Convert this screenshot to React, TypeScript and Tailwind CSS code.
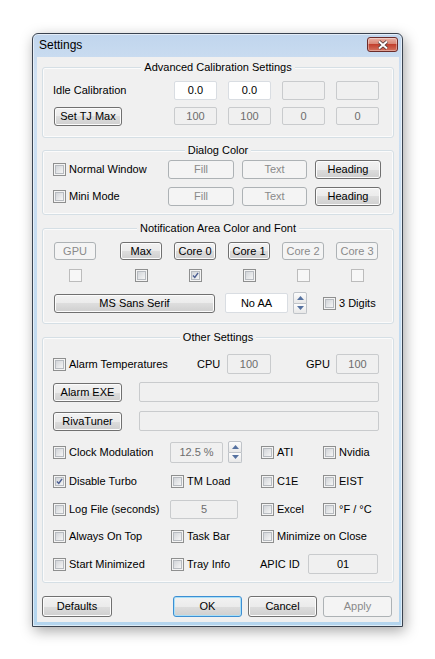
import React from "react";

type Kids = { children?: React.ReactNode; className?: string };

const BTN_FACE = "bg-[linear-gradient(#f2f2f2,#ebebeb_50%,#dddddd_50%,#cfcfcf)]";

function Btn({
  children,
  className = "",
  disabled = false,
  isDefault = false,
}: Kids & { disabled?: boolean; isDefault?: boolean }) {
  const look = disabled
    ? "border-[#adb2b5] bg-[#f4f4f4] text-[#8a8a8a]"
    : isDefault
      ? `border-[#3c8ed3] ${BTN_FACE} shadow-[inset_0_0_0_1px_#a9dff7] text-black`
      : `border-[#707070] ${BTN_FACE} shadow-[inset_0_0_0_1px_#fcfcfc] text-black`;
  return (
    <button
      type="button"
      className={`flex shrink-0 items-center justify-center rounded-[3px] border leading-[13px] ${look} ${className}`}
    >
      {children}
    </button>
  );
}

function Edit({ children, className = "", on = false, dark = false }: Kids & { on?: boolean; dark?: boolean }) {
  const look = on ? "border-[#d9dde2] bg-white" : "border-[#c9cbcd] bg-[#f0f0f0]";
  return (
    <div
      className={`flex shrink-0 items-center justify-center rounded-[2px] border leading-[13px] ${look} ${
        on || dark ? "text-black" : "text-[#6d6d6d]"
      } ${className}`}
    >
      {children}
    </div>
  );
}

function Box({ on = true, checked = false }: { on?: boolean; checked?: boolean }) {
  if (!on) {
    return <span className="block h-[13px] w-[13px] shrink-0 border border-[#bcbcbc] bg-[#f7f7f7]" />;
  }
  return (
    <span className="flex h-[13px] w-[13px] shrink-0 border border-[#8e8f8f] bg-[#f4f4f4] p-[1px]">
      <span className="flex h-full w-full items-center justify-center border border-[#b7bbc0] bg-[linear-gradient(135deg,#d2d5d9,#f5f5f5)]">
        {checked && (
          <svg width="9" height="9" viewBox="0 0 9 9">
            <path d="M1.2 4.6 L3.6 7 L7.8 1.2" fill="none" stroke="#4a5d91" strokeWidth="1.8" />
          </svg>
        )}
      </span>
    </span>
  );
}

function Check({
  label,
  className = "",
  on = true,
  checked = false,
}: {
  label: string;
  className?: string;
  on?: boolean;
  checked?: boolean;
}) {
  return (
    <div className={`flex shrink-0 items-center gap-[3px] ${className}`}>
      <Box on={on} checked={checked} />
      <span className="leading-[13px] whitespace-nowrap">{label}</span>
    </div>
  );
}

function Spin({ className = "" }: { className?: string }) {
  return (
    <div className={`flex w-[14px] shrink-0 flex-col ${className}`}>
      <div className="flex flex-1 items-center justify-center rounded-t-[2px] border border-[#bfc3c8] bg-[linear-gradient(#fcfcfc,#e8e8e8)]">
        <svg width="7" height="4" viewBox="0 0 7 4">
          <path d="M0 4 L3.5 0 L7 4Z" fill="#5571a0" />
        </svg>
      </div>
      <div className="flex flex-1 items-center justify-center rounded-b-[2px] border border-t-0 border-[#bfc3c8] bg-[linear-gradient(#fcfcfc,#e8e8e8)]">
        <svg width="7" height="4" viewBox="0 0 7 4">
          <path d="M0 0 L3.5 4 L7 0Z" fill="#5571a0" />
        </svg>
      </div>
    </div>
  );
}

function Group({ title, children, className = "" }: Kids & { title: string }) {
  return (
    <div className={`mx-[5px] rounded-[3px] border border-[#d5dfe5] shadow-[inset_0_0_0_1px_#fbfbfb] ${className}`}>
      <div className="mx-auto -mt-[7px] w-fit bg-[#f0f0f0] px-[3px] leading-[13px]">{title}</div>
      {children}
    </div>
  );
}

export default function App() {
  return (
    <div className="min-h-screen bg-white pt-[33px] pl-[32px] font-['Liberation_Sans',Arial,sans-serif] text-[11px] text-black">
      <div className="w-[371px] rounded-t-[6px] border border-[#3a4350] bg-[linear-gradient(#c0d5ed,#cfe0f2_40px,#b4d5ee)] shadow-[2px_4px_14px_rgba(0,0,0,0.35),inset_0_0_0_1px_rgba(255,255,255,0.55)]">
        {/* title bar */}
        <div className="flex h-[23px] items-start justify-between pr-[4px] pl-[6px]">
          <span className="pt-[4px] text-[12px] leading-[14px]">Settings</span>
          <div className="mt-[3px] flex h-[15px] w-[31px] items-center justify-center rounded-[3px] border border-[#6b2c2a] bg-[linear-gradient(#eab2a6,#d98675_45%,#c2402e_50%,#d3735f)] shadow-[inset_0_0_0_1px_rgba(255,255,255,0.35)]">
            <svg width="12" height="10" viewBox="0 0 12 10">
              <path d="M2 1.5 L10 8.5 M10 1.5 L2 8.5" stroke="#4a3434" strokeWidth="3.6" />
              <path d="M2 1.5 L10 8.5 M10 1.5 L2 8.5" stroke="#ffffff" strokeWidth="2" />
            </svg>
          </div>
        </div>

        {/* client area */}
        <div className="mr-[3px] mb-[4px] ml-[4px] bg-[#f0f0f0] pt-[10px] pb-[5px]">
          <Group title="Advanced Calibration Settings" className="pb-[11px]">
            <div className="mt-[7px] grid grid-cols-[110px_43px_43px_43px_43px] gap-x-[11px] gap-y-[7px] pl-[10px]">
              <div className="flex h-[19px] items-center leading-[13px]">Idle Calibration</div>
              <Edit on className="h-[19px]">0.0</Edit>
              <Edit on className="h-[19px]">0.0</Edit>
              <Edit className="h-[19px]" />
              <Edit className="h-[19px]" />
              <Btn className="ml-[1px] h-[19px] w-[68px]">Set TJ Max</Btn>
              <Edit className="h-[18px]">100</Edit>
              <Edit className="h-[18px]">100</Edit>
              <Edit className="h-[18px]">0</Edit>
              <Edit className="h-[18px]">0</Edit>
            </div>
          </Group>

          <Group title="Dialog Color" className="mt-[12px] pb-[8px]">
            <div className="mt-[3px] grid grid-cols-[107px_66px_65px_66px] gap-x-[8px] gap-y-[8px] pl-[10px]">
              <Check label="Normal Window" className="h-[19px]" />
              <Btn disabled className="h-[19px]">Fill</Btn>
              <Btn disabled className="h-[19px]">Text</Btn>
              <Btn className="h-[19px]">Heading</Btn>
              <Check label="Mini Mode" className="h-[19px]" />
              <Btn disabled className="h-[19px]">Fill</Btn>
              <Btn disabled className="h-[19px]">Text</Btn>
              <Btn className="h-[19px]">Heading</Btn>
            </div>
          </Group>

          <Group title="Notification Area Color and Font" className="mt-[13px] pb-[10px]">
            <div className="pl-[11px]">
              <div className="mt-[7px] flex gap-[12px]">
                <Btn disabled className="h-[18px] w-[42px]">GPU</Btn>
                <Btn className="ml-[12px] h-[18px] w-[42px]">Max</Btn>
                <Btn className="h-[18px] w-[42px]">Core 0</Btn>
                <Btn className="h-[18px] w-[42px]">Core 1</Btn>
                <Btn disabled className="h-[18px] w-[42px]">Core 2</Btn>
                <Btn disabled className="h-[18px] w-[42px]">Core 3</Btn>
              </div>
              <div className="mt-[9px] flex gap-[12px]">
                <div className="flex w-[42px] justify-center">
                  <Box on={false} />
                </div>
                <div className="ml-[12px] flex w-[42px] justify-center">
                  <Box />
                </div>
                <div className="flex w-[42px] justify-center">
                  <Box checked />
                </div>
                <div className="flex w-[42px] justify-center">
                  <Box />
                </div>
                <div className="flex w-[42px] justify-center">
                  <Box on={false} />
                </div>
                <div className="flex w-[42px] justify-center">
                  <Box on={false} />
                </div>
              </div>
              <div className="mt-[11px] flex h-[20px] items-center">
                <Btn className="h-[19px] w-[161px]">MS Sans Serif</Btn>
                <Edit on className="ml-[10px] h-[20px] w-[63px]">No AA</Edit>
                <Spin className="ml-[5px] h-[22px]" />
                <Check label="3 Digits" className="ml-[16px]" />
              </div>
            </div>
          </Group>

          <Group title="Other Settings" className="mt-[13px] pb-[8px]">
            <div className="pl-[10px]">
              <div className="mt-[10px] flex h-[20px] items-center">
                <Check label="Alarm Temperatures" className="w-[144px]" />
                <span className="w-[30px] leading-[13px]">CPU</span>
                <Edit className="h-[20px] w-[44px]">100</Edit>
                <span className="ml-[35px] w-[30px] leading-[13px]">GPU</span>
                <Edit className="h-[20px] w-[43px]">100</Edit>
              </div>
              <div className="mt-[8px] flex h-[20px] items-center">
                <Btn className="h-[19px] w-[69px]">Alarm EXE</Btn>
                <Edit className="ml-[17px] h-[20px] w-[240px]" />
              </div>
              <div className="mt-[9px] flex h-[20px] items-center">
                <Btn className="h-[19px] w-[69px]">RivaTuner</Btn>
                <Edit className="ml-[17px] h-[20px] w-[240px]" />
              </div>
              <div className="mt-[11px] flex h-[20px] items-center">
                <Check label="Clock Modulation" className="w-[117px]" />
                <Edit className="h-[21px] w-[53px]">12.5 %</Edit>
                <Spin className="ml-[5px] h-[22px]" />
                <Check label="ATI" className="ml-[19px] w-[62px]" />
                <Check label="Nvidia" />
              </div>
              <div className="mt-[9px] flex h-[20px] items-center">
                <Check label="Disable Turbo" checked className="w-[118px]" />
                <Check label="TM Load" className="w-[90px]" />
                <Check label="C1E" className="w-[62px]" />
                <Check label="EIST" />
              </div>
              <div className="mt-[8px] flex h-[20px] items-center">
                <Check label="Log File (seconds)" className="w-[117px]" />
                <Edit className="h-[19px] w-[68px]">5</Edit>
                <Check label="Excel" className="ml-[23px] w-[62px]" />
                <Check label="°F / °C" />
              </div>
              <div className="mt-[7px] flex h-[20px] items-center">
                <Check label="Always On Top" className="w-[118px]" />
                <Check label="Task Bar" className="w-[90px]" />
                <Check label="Minimize on Close" />
              </div>
              <div className="mt-[8px] flex h-[20px] items-center">
                <Check label="Start Minimized" className="w-[118px]" />
                <Check label="Tray Info" className="w-[89px]" />
                <span className="w-[48px] leading-[13px]">APIC ID</span>
                <Edit dark className="h-[20px] w-[70px]">01</Edit>
              </div>
            </div>
          </Group>

          <div className="mt-[13px] flex pl-[5px]">
            <Btn className="h-[21px] w-[70px]">Defaults</Btn>
            <Btn isDefault className="ml-[61px] h-[21px] w-[69px]">OK</Btn>
            <Btn className="ml-[6px] h-[21px] w-[69px]">Cancel</Btn>
            <Btn disabled className="ml-[6px] h-[21px] w-[69px]">Apply</Btn>
          </div>
        </div>
      </div>
    </div>
  );
}
